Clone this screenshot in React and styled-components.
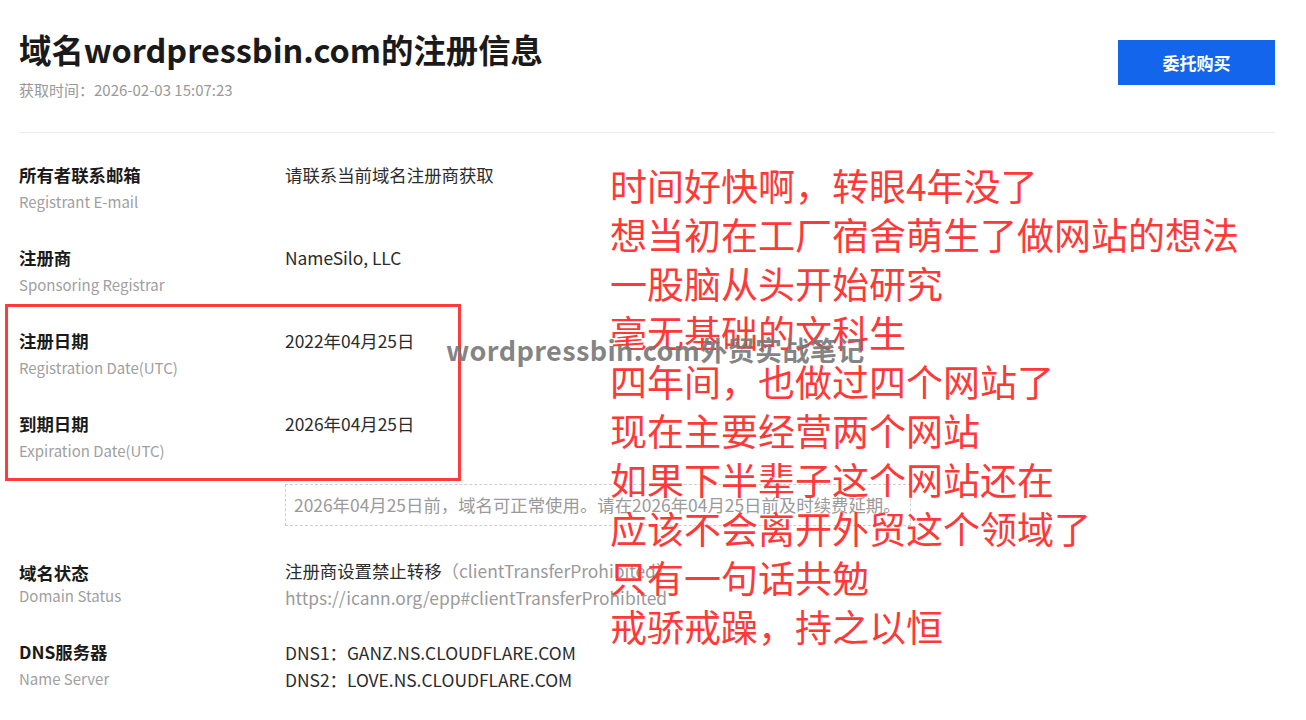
import React from "react";
import styled, { createGlobalStyle } from "styled-components";

const GlobalStyle = createGlobalStyle`
  html, body {
    margin: 0;
    padding: 0;
    background: #ffffff;
  }
  body {
    font-family: "Noto Sans CJK SC", "Noto Sans", sans-serif;
  }
`;

const Page = styled.div`
  position: relative;
  width: 1306px;
  height: 720px;
  overflow: hidden;
  background: #fff;
`;

const Content = styled.div`
  margin: 0 31px 0 19px;
`;

const Header = styled.header`
  display: flex;
  justify-content: space-between;
  align-items: flex-start;
  padding: 29px 0 31px;
  border-bottom: 1px solid #ebebeb;
`;

const Title = styled.h1`
  margin: 0;
  font-size: 32.4px;
  line-height: 40px;
  font-weight: 700;
  color: #1a1a1a;
`;

const FetchTime = styled.div`
  margin-top: 10px;
  font-size: 15px;
  line-height: 22px;
  color: #999;
`;

const BuyButton = styled.button`
  margin-top: 11px;
  width: 157px;
  height: 45px;
  border: none;
  background: #1366ec;
  color: #fff;
  font-family: inherit;
  font-size: 17px;
  font-weight: 700;
  cursor: pointer;
`;

const List = styled.div`
  padding-top: 29px;
`;

const Row = styled.div`
  display: grid;
  grid-template-columns: 266px 1fr;
  margin-top: ${(p) => p.$gap || 0}px;
`;

const Name = styled.div`
  font-size: 17.4px;
  line-height: ${(p) => (p.$compact ? "24px" : "26px")};
  padding-top: ${(p) => (p.$compact ? "4px" : "0")};
  font-weight: 700;
  color: #1a1a1a;
`;

const Sub = styled.div`
  font-size: 15px;
  line-height: ${(p) => (p.$compact ? "22px" : "28px")};
  color: #a0a0a0;
`;

const Value = styled.div`
  font-size: 17.4px;
  line-height: ${(p) => (p.$lh || 26)}px;
  color: #2b2b2b;
`;

const Muted = styled.span`
  color: #9a9a9a;
`;

const NoticeRow = styled.div`
  margin-top: 19px;
  padding-left: 266px;
`;

const Notice = styled.div`
  display: inline-block;
  height: 42px;
  box-sizing: border-box;
  padding: 0 9px 0 8px;
  border: 1px dashed #cfcfcf;
  font-size: 17.4px;
  line-height: 40px;
  color: #9a9a9a;
  white-space: nowrap;
`;

const HighlightBox = styled.div`
  position: absolute;
  left: 5px;
  top: 304px;
  width: 456px;
  height: 177px;
  box-sizing: border-box;
  border: 3px solid #ff3b3b;
`;

const Annotation = styled.div`
  position: absolute;
  left: 610px;
  top: 161px;
  font-size: 37px;
  line-height: 49px;
  color: #ff3838;
  white-space: nowrap;
`;

const Watermark = styled.div`
  position: absolute;
  left: 446px;
  top: 333px;
  font-size: 27px;
  line-height: 34px;
  font-weight: 700;
  letter-spacing: 0.4px;
  color: rgba(120, 120, 120, 0.92);
  white-space: nowrap;
`;

const rows = [
  { name: "所有者联系邮箱", sub: "Registrant E-mail", value: "请联系当前域名注册商获取" },
  { name: "注册商", sub: "Sponsoring Registrar", value: "NameSilo, LLC", gap: 29 },
  { name: "注册日期", sub: "Registration Date(UTC)", value: "2022年04月25日", gap: 29 },
  { name: "到期日期", sub: "Expiration Date(UTC)", value: "2026年04月25日", gap: 29 },
];

const notes = [
  "时间好快啊，转眼4年没了",
  "想当初在工厂宿舍萌生了做网站的想法",
  "一股脑从头开始研究",
  "毫无基础的文科生",
  "四年间，也做过四个网站了",
  "现在主要经营两个网站",
  "如果下半辈子这个网站还在",
  "应该不会离开外贸这个领域了",
  "只有一句话共勉",
  "戒骄戒躁，持之以恒",
];

export default function App() {
  return (
    <>
      <GlobalStyle />
      <Page>
        <Content>
          <Header>
            <div>
              <Title>域名wordpressbin.com的注册信息</Title>
              <FetchTime>获取时间：2026-02-03 15:07:23</FetchTime>
            </div>
            <BuyButton>委托购买</BuyButton>
          </Header>

          <List>
            {rows.map((r) => (
              <Row key={r.name} $gap={r.gap}>
                <div>
                  <Name>{r.name}</Name>
                  <Sub>{r.sub}</Sub>
                </div>
                <Value>{r.value}</Value>
              </Row>
            ))}

            <NoticeRow>
              <Notice>2026年04月25日前，域名可正常使用。请在2026年04月25日前及时续费延期。</Notice>
            </NoticeRow>

            <Row $gap={31}>
              <div>
                <Name $compact>域名状态</Name>
                <Sub $compact>Domain Status</Sub>
              </div>
              <Value $lh={27}>
                注册商设置禁止转移<Muted>（clientTransferProhibited）</Muted>
                <br />
                <Muted>https://icann.org/epp#clientTransferProhibited</Muted>
              </Value>
            </Row>

            <Row $gap={28}>
              <div>
                <Name>DNS服务器</Name>
                <Sub>Name Server</Sub>
              </div>
              <Value $lh={27}>
                DNS1：GANZ.NS.CLOUDFLARE.COM
                <br />
                DNS2：LOVE.NS.CLOUDFLARE.COM
              </Value>
            </Row>
          </List>
        </Content>

        <HighlightBox />
        <Annotation>
          {notes.map((n) => (
            <div key={n}>{n}</div>
          ))}
        </Annotation>
        <Watermark>wordpressbin.com外贸实战笔记</Watermark>
      </Page>
    </>
  );
}
